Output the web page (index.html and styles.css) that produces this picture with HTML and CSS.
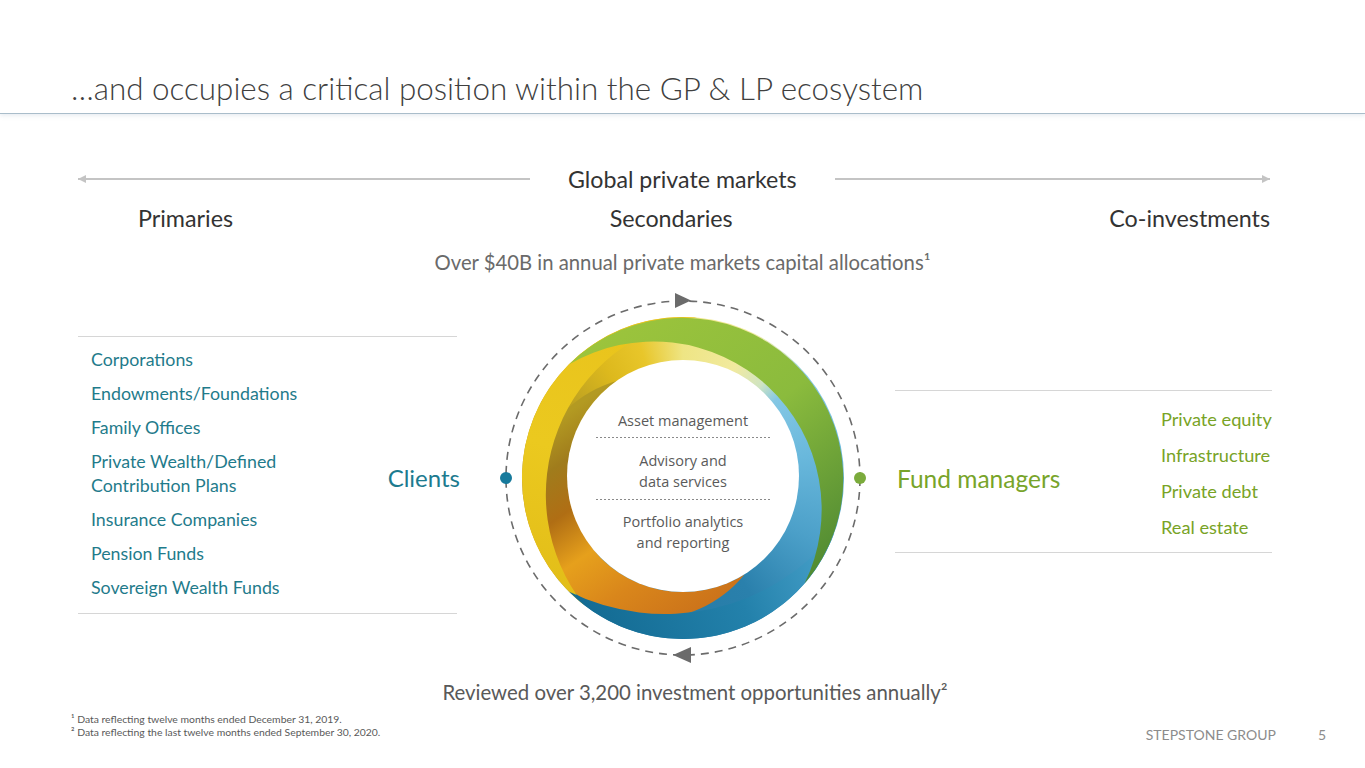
FILE: index.html
```html
<!DOCTYPE html>
<html lang="en">
<head>
<meta charset="utf-8">
<title>StepStone ecosystem</title>
<link rel="stylesheet" href="styles.css">
</head>
<body>
<div class="slide">
  <header class="header">
    <h1 class="title">…and occupies a critical position within the GP &amp; LP ecosystem</h1>
  </header>

  <div class="markets">
    <span class="axis axis-left"></span>
    <span class="markets-label">Global private markets</span>
    <span class="axis axis-right"></span>
  </div>

  <div class="tiers">
    <span>Primaries</span>
    <span>Secondaries</span>
    <span>Co-investments</span>
  </div>

  <p class="allocations">Over $40B in annual private markets capital allocations¹</p>

  <div class="ecosystem">
    <div class="side side-clients">
      <ul class="list list-clients">
        <li>Corporations</li>
        <li>Endowments/Foundations</li>
        <li>Family Offices</li>
        <li>Private Wealth/Defined<br>Contribution Plans</li>
        <li>Insurance Companies</li>
        <li>Pension Funds</li>
        <li>Sovereign Wealth Funds</li>
      </ul>
      <span class="side-label clients-label">Clients</span>
    </div>

    <div class="cycle">
      <div class="cycle-ring"></div>
      <svg class="cycle-svg" width="380" height="370" viewBox="493 293 380 370" xmlns="http://www.w3.org/2000/svg">
        <defs>
          <linearGradient id="gYellow" gradientUnits="userSpaceOnUse" x1="560" y1="600" x2="640" y2="320">
            <stop offset="0" stop-color="#e2bd18"/>
            <stop offset="0.5" stop-color="#ebc91f"/>
            <stop offset="1" stop-color="#e9c31c"/>
          </linearGradient>
          <linearGradient id="gOrange" gradientUnits="userSpaceOnUse" x1="745" y1="600" x2="600" y2="390">
            <stop offset="0" stop-color="#c86e1a"/>
            <stop offset="0.3" stop-color="#d9861b"/>
            <stop offset="0.5" stop-color="#e6a01c"/>
            <stop offset="0.68" stop-color="#b06e14"/>
            <stop offset="0.85" stop-color="#a07c1c"/>
            <stop offset="1" stop-color="#b39a22"/>
          </linearGradient>
          <linearGradient id="gBlue" gradientUnits="userSpaceOnUse" x1="840" y1="520" x2="590" y2="620">
            <stop offset="0" stop-color="#4ea6cf"/>
            <stop offset="0.45" stop-color="#2381ab"/>
            <stop offset="1" stop-color="#136b93"/>
          </linearGradient>
          <linearGradient id="gGreen" gradientUnits="userSpaceOnUse" x1="600" y1="330" x2="815" y2="590">
            <stop offset="0" stop-color="#9cc43c"/>
            <stop offset="0.5" stop-color="#8bbb3d"/>
            <stop offset="1" stop-color="#4c8732"/>
          </linearGradient>
        </defs>

        <path d="M 744.5 574.4 A 116 116 0 0 1 616.5 381.0 A 121.5 121.5 0 1 0 744.5 574.4 Z" fill="url(#gOrange)"/>
        <path d="M 583.9 604.9 A 161 161 0 0 1 697.0 317.6 A 179.1 179.1 0 0 0 583.9 604.9 Z" fill="url(#gYellow)"/>
        <path d="M 834.3 533.1 A 161 161 0 0 1 569.2 591.8 A 217.9 217.9 0 0 0 834.3 533.1 Z" fill="url(#gBlue)"/>
        <path d="M 569.2 364.2 A 161 161 0 0 1 804.5 583.6 A 168.1 168.1 0 0 0 569.2 364.2 Z" fill="url(#gGreen)"/>
        <circle cx="683" cy="476" r="116" fill="#ffffff"/>

        <circle cx="683" cy="478" r="177" fill="none" stroke="#6b6b6b" stroke-width="1.6" stroke-dasharray="8 6"/>
        <polygon points="675,293 691,300.5 675,308" fill="#6b6b6b"/>
        <polygon points="691,647 673,655 691,663" fill="#6b6b6b"/>
        <circle cx="506" cy="478" r="6" fill="#177a9c"/>
        <circle cx="860" cy="478" r="6" fill="#7bab3c"/>

        <line x1="596" y1="437.5" x2="771" y2="437.5" class="sep"/>
        <line x1="596" y1="499.5" x2="771" y2="499.5" class="sep"/>
        <text class="svc" x="683" y="426">Asset management</text>
        <text class="svc" x="683" y="466">Advisory and</text>
        <text class="svc" x="683" y="487">data services</text>
        <text class="svc" x="683" y="527">Portfolio analytics</text>
        <text class="svc" x="683" y="548">and reporting</text>
      </svg>
    </div>

    <div class="side side-managers">
      <span class="side-label managers-label">Fund managers</span>
      <ul class="list list-managers">
        <li>Private equity</li>
        <li>Infrastructure</li>
        <li>Private debt</li>
        <li>Real estate</li>
      </ul>
    </div>
  </div>

  <p class="reviewed">Reviewed over 3,200 investment opportunities annually²</p>

  <footer class="footer">
    <div class="footnotes">
      <p>¹ Data reflecting twelve months ended December 31, 2019.</p>
      <p>² Data reflecting the last twelve months ended September 30, 2020.</p>
    </div>
    <span class="brand">STEPSTONE GROUP</span>
    <span class="page-num">5</span>
  </footer>
</div>
</body>
</html>
```

FILE: styles.css
```css
html, body {
  margin: 0;
  padding: 0;
  background: #ffffff;
}

body {
  width: 1365px;
  height: 768px;
  overflow: hidden;
  font-family: Lato, "Open Sans", "Liberation Sans", sans-serif;
  color: #404040;
}

.slide {
  width: 1365px;
  height: 768px;
  display: flex;
  flex-direction: column;
}

/* Header */
.header {
  height: 113px;
  border-bottom: 1px solid #a9bdca;
  box-shadow: 0 2px 4px rgba(169, 189, 202, 0.25);
  flex: none;
}

.title {
  margin: 0;
  padding: 71px 0 0 71px;
  font-size: 31.4px;
  line-height: 35px;
  font-weight: 300;
  color: #404040;
  white-space: nowrap;
}

/* Global private markets axis */
.markets {
  margin-top: 53px;
  padding: 0 95px 0 78px;
  display: flex;
  align-items: center;
  height: 24px;
}

.axis {
  position: relative;
  height: 2px;
  background: #c4c4c4;
}

.axis-left {
  width: 452px;
  flex: none;
}

.axis-right {
  flex: 1;
}

.axis-left::before,
.axis-right::after {
  content: "";
  position: absolute;
  top: -3px;
  border-top: 4px solid transparent;
  border-bottom: 4px solid transparent;
}

.axis-left::before {
  left: 0;
  border-right: 8px solid #c4c4c4;
}

.axis-right::after {
  right: 0;
  border-left: 8px solid #c4c4c4;
}

.markets-label {
  margin: 0 38px;
  font-size: 23.2px;
  line-height: 24px;
  color: #333333;
  white-space: nowrap;
}

/* Tiers row */
.tiers {
  margin-top: 15px;
  padding: 0 95px 0 138px;
  display: flex;
  justify-content: space-between;
  font-size: 23.3px;
  line-height: 24px;
  color: #333333;
}

.allocations {
  margin: 20px 0 0;
  text-align: center;
  font-size: 20.3px;
  line-height: 24px;
  color: #6a6a6a;
}

/* Ecosystem row */
.ecosystem {
  margin-top: 19px;
  display: flex;
  align-items: flex-start;
}

.side {
  display: flex;
  align-items: center;
  border-top: 1px solid #d6d6d6;
  border-bottom: 1px solid #d6d6d6;
  flex: none;
}

.side-clients {
  width: 379px;
  margin-left: 78px;
  margin-top: 43px;
}

.side-managers {
  width: 377px;
  margin-left: 22px;
  margin-top: 97px;
}

.list {
  list-style: none;
  margin: 0;
  line-height: 24px;
}

.list-clients {
  padding: 10px 0 14px 13px;
  font-size: 17.8px;
  color: #1f7b8b;
}

.list-clients li + li {
  margin-top: 10px;
}

.list-managers {
  width: 111px;
  margin-left: auto;
  padding: 16px 0 13px;
  font-size: 18.2px;
  color: #78a326;
  white-space: nowrap;
}

.list-managers li + li {
  margin-top: 12px;
}

.side-label {
  font-size: 24px;
  line-height: 28px;
  white-space: nowrap;
}

.clients-label {
  margin-left: auto;
  margin-right: -3px;
  margin-top: 6px;
  color: #1d7b8f;
}

.managers-label {
  margin-left: 2px;
  margin-top: 15px;
  font-size: 24.5px;
  color: #78a42a;
}

/* Cycle diagram */
.cycle {
  position: relative;
  width: 380px;
  height: 370px;
  margin-left: 36px;
  flex: none;
}

.cycle-ring {
  position: absolute;
  left: 29px;
  top: 24px;
  width: 322px;
  height: 322px;
  border-radius: 50%;
  background: conic-gradient(
    #eee584 0deg,
    #f1ea9f 25deg,
    #cfe4c2 40deg,
    #84c7e4 50deg,
    #69b8dc 80deg,
    #4ca0c9 115deg,
    #2a80ac 150deg,
    #1f76a0 225deg,
    #d8901b 235deg,
    #c9921a 250deg,
    #a67a1c 265deg,
    #a58a1e 285deg,
    #bfa321 305deg,
    #ddb91d 325deg,
    #e8c62a 342deg,
    #eee584 360deg
  );
}

.cycle-svg {
  position: absolute;
  left: 0;
  top: 0;
}

.sep {
  stroke: #8a8a8a;
  stroke-width: 1;
  stroke-dasharray: 2 2;
}

.svc {
  font-family: "Open Sans", "Liberation Sans", sans-serif;
  font-size: 14.5px;
  fill: #5a5a5a;
  text-anchor: middle;
}

/* Bottom */
.reviewed {
  margin: 17px 0 0;
  padding-left: 25px;
  text-align: center;
  font-size: 20.4px;
  line-height: 24px;
  color: #595959;
}

.footer {
  margin-top: 9px;
  display: flex;
  align-items: flex-end;
}

.footnotes {
  padding-left: 71px;
  font-size: 10.4px;
  line-height: 13px;
  color: #595959;
}

.footnotes p {
  margin: 0;
}

.brand {
  margin-left: auto;
  margin-bottom: -5px;
  font-size: 14px;
  line-height: 18px;
  color: #8c8c8c;
}

.page-num {
  margin: 0 39px -5px 42px;
  font-size: 14px;
  line-height: 18px;
  color: #8c8c8c;
}
```
